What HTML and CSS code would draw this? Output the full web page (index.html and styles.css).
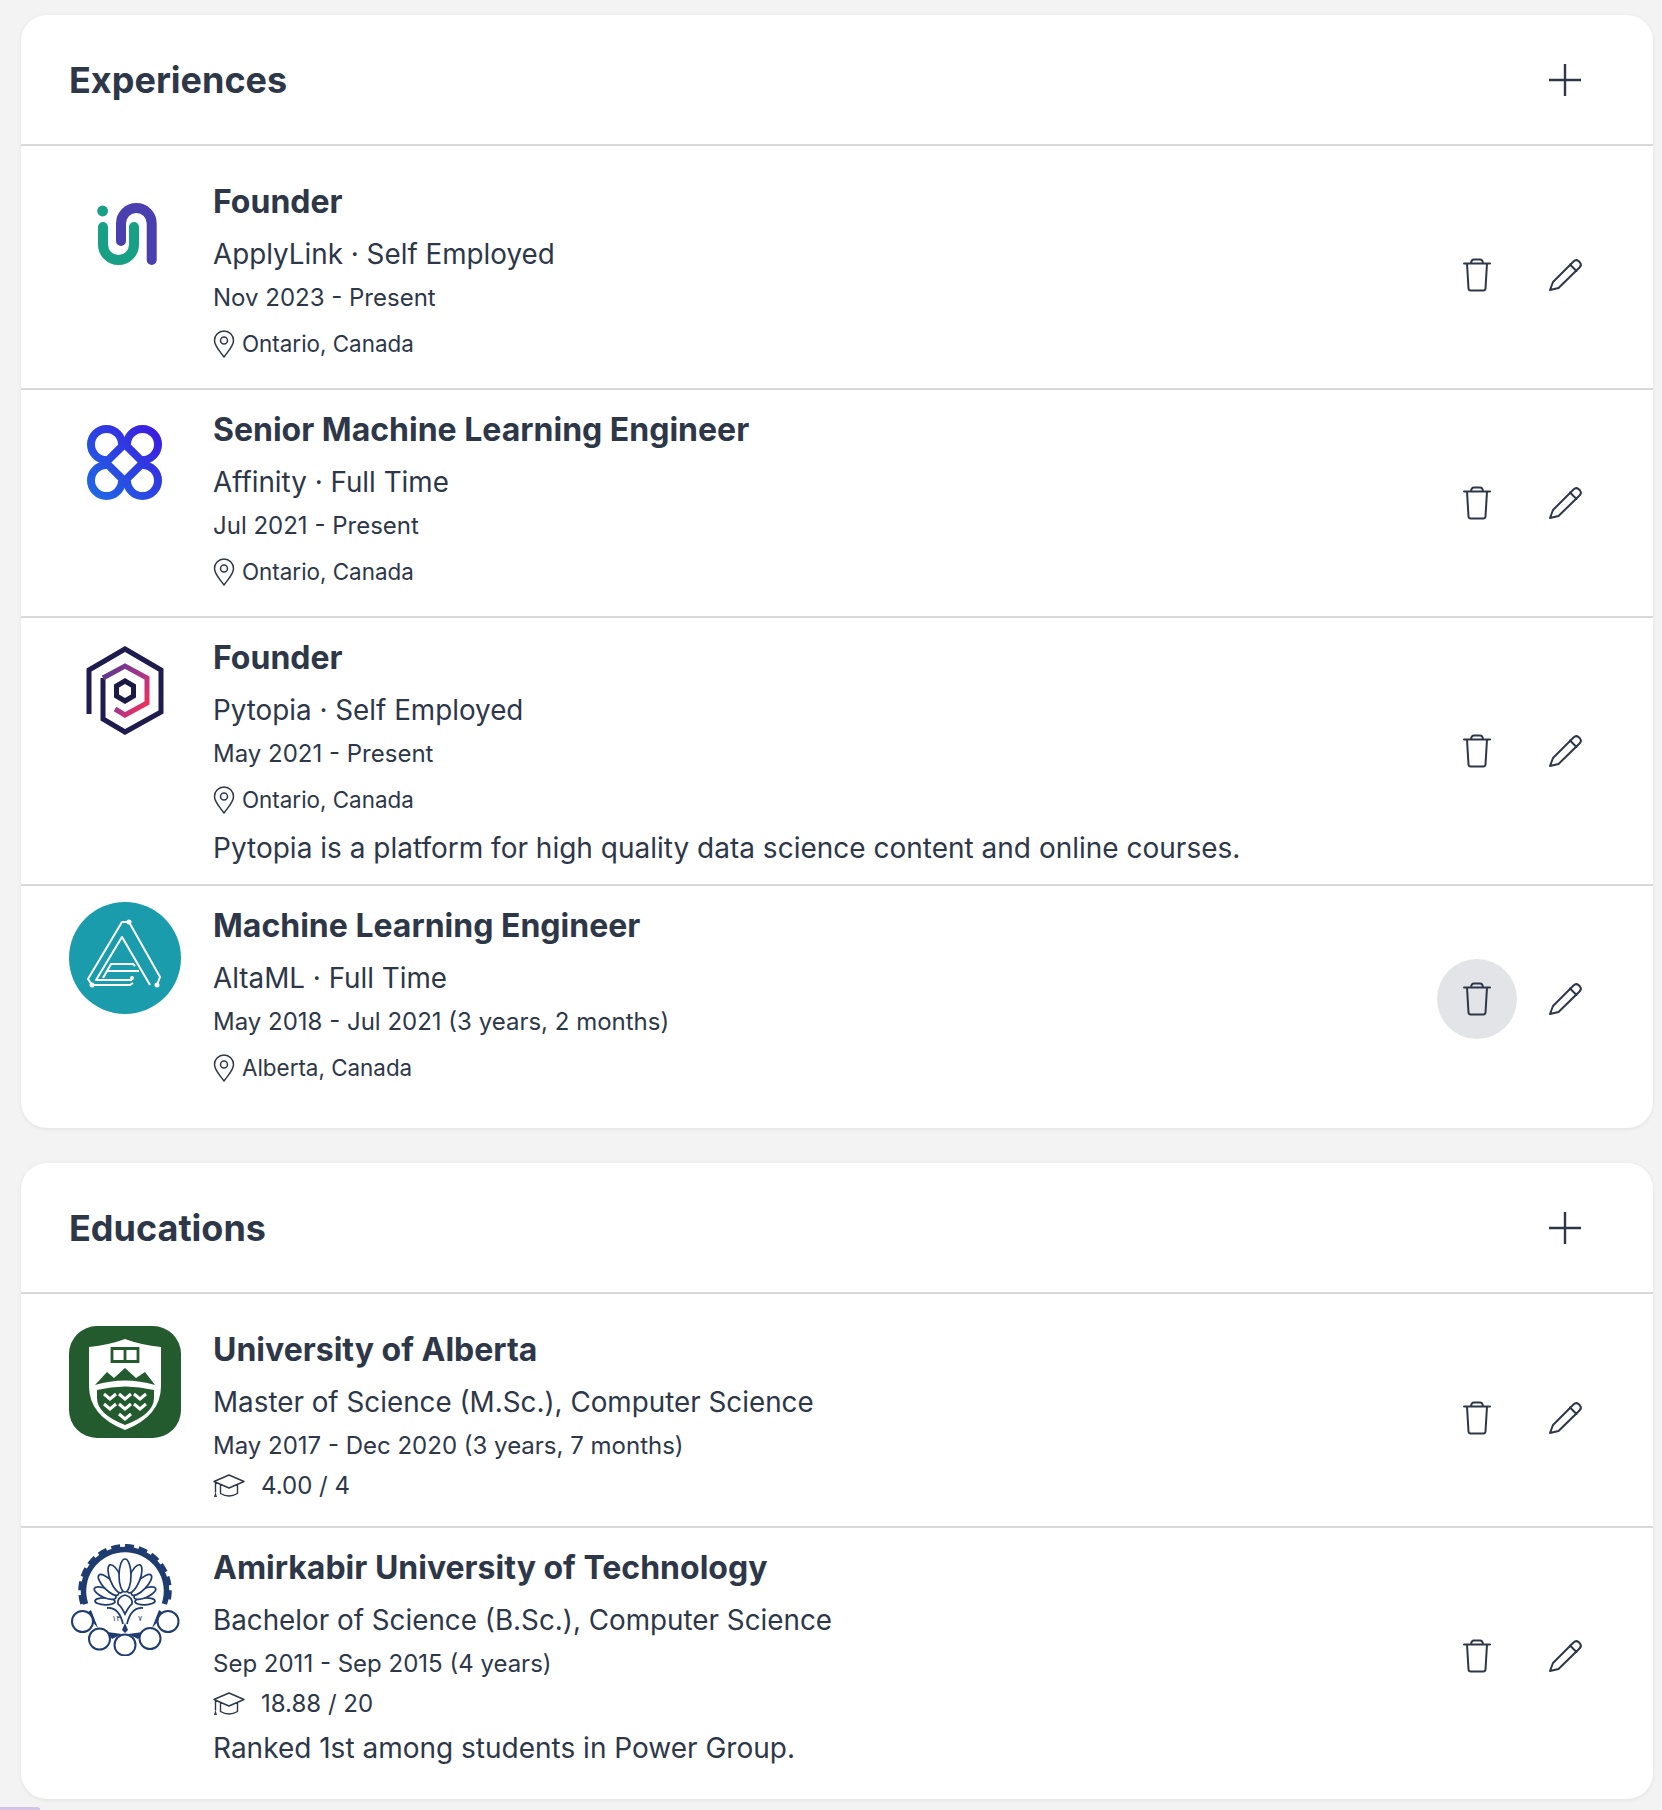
FILE: index.html
```html
<!DOCTYPE html>
<html lang="en">
<head>
  <meta charset="UTF-8">
  <title>Profile</title>
  <link rel="stylesheet" href="styles.css">
</head>
<body>

  <svg class="defs" width="0" height="0" aria-hidden="true">
    <defs>
      <symbol id="i-plus" viewBox="0 0 80 80">
        <path d="M40 24v32M24 40h32" fill="none" stroke="currentColor" stroke-width="2.4"/>
      </symbol>
      <symbol id="i-trash" viewBox="0 0 80 80">
        <path d="M27 28.500h26M30 28.500l1.500 25q.2 2 2.200 2h12.600q2 0 2.200-2L50 28.500M34 28.500q.3-4 3-4h6q2.700 0 3 4" fill="none" stroke="currentColor" stroke-width="2" stroke-linecap="round" stroke-linejoin="round"/>
      </symbol>
      <symbol id="i-pencil" viewBox="0 0 80 80">
        <path d="M25 55l3-8 20.500-20.500q2.500-2.500 5-.5l1.500 1.500q2 2.500-.5 5L33.500 53zM45 29.500l6.500 6.500" fill="none" stroke="currentColor" stroke-width="2" stroke-linecap="round" stroke-linejoin="round"/>
      </symbol>
      <symbol id="i-pin" viewBox="0 0 22 28">
        <path d="M11 27C6 20 1.500 16 1.500 10.500a9.500 9.500 0 0 1 19 0C20.500 16 16 20 11 27z" fill="none" stroke="currentColor" stroke-width="1.500" stroke-linejoin="round"/>
        <circle cx="11" cy="10.500" r="3.500" fill="none" stroke="currentColor" stroke-width="1.500"/>
      </symbol>
      <symbol id="i-grad" viewBox="0 0 32 24">
        <path d="M16 1L31 7.500 16 14 1 7.500zM7.500 10.500v9q8.500 5 17 0v-9M2.500 8.500v10" fill="none" stroke="currentColor" stroke-width="1.400" stroke-linejoin="round"/>
        <path d="M2.500 18l-1.500 5h3z" fill="currentColor"/>
      </symbol>
    </defs>
  </svg>

  <section class="card">
    <header class="card-head">
      <h2>Experiences</h2>
      <button class="icon-btn"><svg><use href="#i-plus"/></svg></button>
    </header>

    <article class="row">
      <svg class="logo" viewBox="0 0 112 112">
        <circle cx="33.600" cy="33" r="5.400" fill="#17a085"/>
        <path d="M52 63V45.400a15.350 15.350 0 0 1 30.700 0V82" fill="none" stroke="#4a3fae" stroke-width="10" stroke-linecap="round"/>
        <path d="M34 49V66.500a15.500 15.500 0 0 0 31 0V49" fill="none" stroke="#17a085" stroke-width="10" stroke-linecap="round"/>
      </svg>
      <div class="info">
        <h3>Founder</h3>
        <p class="sub">ApplyLink · Self Employed</p>
        <p class="date">Nov 2023 - Present</p>
        <p class="place"><svg class="pin"><use href="#i-pin"/></svg>Ontario, Canada</p>
      </div>
      <div class="actions">
        <button class="icon-btn"><svg><use href="#i-trash"/></svg></button>
        <button class="icon-btn"><svg><use href="#i-pencil"/></svg></button>
      </div>
    </article>

    <article class="row">
      <svg class="logo" viewBox="0 0 112 112">
        <defs>
          <linearGradient id="aff" gradientUnits="userSpaceOnUse" x1="18" y1="94" x2="93" y2="19">
            <stop offset="0" stop-color="#1c6fe4"/>
            <stop offset="1" stop-color="#3d16e0"/>
          </linearGradient>
        </defs>
        <g fill="none" stroke="url(#aff)" stroke-width="8">
          <path d="M53 38.500A15.500 15.500 0 1 0 37.500 54"/>
          <path d="M58 38.500A15.500 15.500 0 1 1 73.500 54"/>
          <path d="M37.500 59A15.500 15.500 0 1 0 53 74.500"/>
          <path d="M73.500 59A15.500 15.500 0 1 1 58 74.500"/>
          <path d="M55.500 37.800L74.200 56.500 55.500 75.200 36.800 56.500z"/>
        </g>
      </svg>
      <div class="info">
        <h3>Senior Machine Learning Engineer</h3>
        <p class="sub">Affinity · Full Time</p>
        <p class="date">Jul 2021 - Present</p>
        <p class="place"><svg class="pin"><use href="#i-pin"/></svg>Ontario, Canada</p>
      </div>
      <div class="actions">
        <button class="icon-btn"><svg><use href="#i-trash"/></svg></button>
        <button class="icon-btn"><svg><use href="#i-pencil"/></svg></button>
      </div>
    </article>

    <article class="row">
      <svg class="logo" viewBox="0 0 112 112">
        <defs>
          <linearGradient id="pyt" gradientUnits="userSpaceOnUse" x1="34" y1="40" x2="78" y2="70">
            <stop offset="0" stop-color="#5b3a8c"/>
            <stop offset="0.6" stop-color="#a8358c"/>
            <stop offset="1" stop-color="#ee2f5c"/>
          </linearGradient>
        </defs>
        <g fill="none" stroke-width="5" stroke-linejoin="miter">
          <path d="M20 80V36L56 15 92 36V78L56 98 34 85V44" stroke="#1e1b4f"/>
          <path d="M34 44L56 32 78 44V69L56 81 46 75" stroke="url(#pyt)"/>
          <path d="M56 47L64.500 52V62L56 67 47.500 62V52z" stroke="#1a1a44"/>
        </g>
      </svg>
      <div class="info">
        <h3>Founder</h3>
        <p class="sub">Pytopia · Self Employed</p>
        <p class="date">May 2021 - Present</p>
        <p class="place"><svg class="pin"><use href="#i-pin"/></svg>Ontario, Canada</p>
        <p class="desc">Pytopia is a platform for high quality data science content and online courses.</p>
      </div>
      <div class="actions">
        <button class="icon-btn"><svg><use href="#i-trash"/></svg></button>
        <button class="icon-btn"><svg><use href="#i-pencil"/></svg></button>
      </div>
    </article>

    <article class="row">
      <svg class="logo" viewBox="0 0 112 112">
        <circle cx="56" cy="56" r="56" fill="#1a9cad"/>
        <g fill="none" stroke="#fff" stroke-width="2" stroke-linejoin="round">
          <path d="M60 20L91 75 88 83"/>
          <path d="M60 20H53L19 77 23 83H61L64 81"/>
          <path d="M81 83L53 35 27 78H63"/>
          <path d="M34 76L42 62H64L66 64"/>
          <path d="M38 69H70"/>
        </g>
        <g fill="#fff">
          <circle cx="60" cy="20" r="2.500"/>
          <circle cx="88" cy="83" r="2.500"/>
          <circle cx="23" cy="83" r="2.500"/>
          <circle cx="63" cy="76" r="2"/>
        </g>
      </svg>
      <div class="info">
        <h3>Machine Learning Engineer</h3>
        <p class="sub">AltaML · Full Time</p>
        <p class="date">May 2018 - Jul 2021 (3 years, 2 months)</p>
        <p class="place"><svg class="pin"><use href="#i-pin"/></svg>Alberta, Canada</p>
      </div>
      <div class="actions">
        <button class="icon-btn hover"><svg><use href="#i-trash"/></svg></button>
        <button class="icon-btn"><svg><use href="#i-pencil"/></svg></button>
      </div>
    </article>
  </section>

  <section class="card">
    <header class="card-head">
      <h2>Educations</h2>
      <button class="icon-btn"><svg><use href="#i-plus"/></svg></button>
    </header>

    <article class="row">
      <svg class="logo" viewBox="0 0 112 112">
        <rect width="112" height="112" rx="28" fill="#235a2e"/>
        <path d="M20 21Q40 19 56 13 72 19 92 21V60Q92 90 56 104 20 90 20 60z" fill="#fff"/>
        <path d="M43 22.500h26v13H43zM56 22.500v13" fill="none" stroke="#235a2e" stroke-width="2.800"/>
        <path d="M26 59L38 46 45 52 56 42 67 52 76 46 86 59Q56 50 26 59z" fill="#235a2e"/>
        <path d="M28 64Q56 57 85 64V72Q85 88 56 99 28 88 28 72z" fill="#235a2e"/>
        <g fill="none" stroke="#fff" stroke-width="3">
          <path d="M35 68l6 5 6-5M35 78l6 5 6-5M50 68l6 5 6-5M50 78l6 5 6-5M50 88l6 5 6-5M65 68l6 5 6-5M65 78l6 5 6-5"/>
        </g>
      </svg>
      <div class="info">
        <h3>University of Alberta</h3>
        <p class="sub">Master of Science (M.Sc.), Computer Science</p>
        <p class="date">May 2017 - Dec 2020 (3 years, 7 months)</p>
        <p class="gpa"><svg class="grad"><use href="#i-grad"/></svg>4.00 / 4</p>
      </div>
      <div class="actions">
        <button class="icon-btn"><svg><use href="#i-trash"/></svg></button>
        <button class="icon-btn"><svg><use href="#i-pencil"/></svg></button>
      </div>
    </article>

    <article class="row">
      <svg class="logo" viewBox="0 0 112 112">
        <path d="M16.600 60A41.500 41.500 0 1 1 95.400 60" fill="none" stroke="#1f3c70" stroke-width="5.500"/>
        <path d="M13 60A45 45 0 1 1 99 60" fill="none" stroke="#1f3c70" stroke-width="3.500" stroke-dasharray="9 5"/>
        <g fill="#fff" stroke="#1f3c70" stroke-width="1.700">
          <ellipse cx="56" cy="38" rx="3.500" ry="10" transform="rotate(88 56 58)"/>
          <ellipse cx="56" cy="38" rx="3.500" ry="10" transform="rotate(-88 56 58)"/>
          <ellipse cx="56" cy="36.250" rx="4.500" ry="11.750" transform="rotate(66 56 58)"/>
          <ellipse cx="56" cy="36.250" rx="4.500" ry="11.750" transform="rotate(-66 56 58)"/>
          <ellipse cx="56" cy="34.250" rx="5" ry="13.750" transform="rotate(44 56 58)"/>
          <ellipse cx="56" cy="34.250" rx="5" ry="13.750" transform="rotate(-44 56 58)"/>
          <ellipse cx="56" cy="33" rx="5.500" ry="15" transform="rotate(22 56 58)"/>
          <ellipse cx="56" cy="33" rx="5.500" ry="15" transform="rotate(-22 56 58)"/>
          <ellipse cx="56" cy="31.500" rx="6" ry="16.500"/>
        </g>
        <path d="M56 51q8 2 7 9-3 2-7 10-4-8-7-10-1-7 7-9z" fill="#fff" stroke="#1f3c70" stroke-width="1.700"/>
        <path d="M38 64q12-1 16 16M74 64q-12-1-16 16" fill="none" stroke="#1f3c70" stroke-width="1.800"/>
        <text class="digits" x="43" y="77">۱۳</text>
        <text class="digits" x="69" y="77">۷</text>
        <path d="M22 66L29 84 16 70zM90 66L83 84 96 70zM38 88L53 90 43 95zM74 88L59 90 69 95zM56 79l3 7-3 3-3-3z" fill="#1f3c70"/>
        <g fill="#fff" stroke="#1f3c70" stroke-width="2">
          <circle cx="13.500" cy="77.500" r="10.500"/>
          <circle cx="30.500" cy="95" r="10.500"/>
          <circle cx="56" cy="101" r="10.500"/>
          <circle cx="81" cy="94.500" r="10.500"/>
          <circle cx="99" cy="77.500" r="10.500"/>
        </g>
      </svg>
      <div class="info">
        <h3>Amirkabir University of Technology</h3>
        <p class="sub">Bachelor of Science (B.Sc.), Computer Science</p>
        <p class="date">Sep 2011 - Sep 2015 (4 years)</p>
        <p class="gpa"><svg class="grad"><use href="#i-grad"/></svg>18.88 / 20</p>
        <p class="desc">Ranked 1st among students in Power Group.</p>
      </div>
      <div class="actions">
        <button class="icon-btn"><svg><use href="#i-trash"/></svg></button>
        <button class="icon-btn"><svg><use href="#i-pencil"/></svg></button>
      </div>
    </article>
  </section>

  <div class="peek"></div>

</body>
</html>
```

FILE: styles.css
```css
body {
  margin: 0;
  padding: 15px 9px 0 21px;
  background: #f3f3f3;
  color: #2d3748;
  font-family: "Inter", "Liberation Sans", sans-serif;
}

.defs {
  position: absolute;
}

.card {
  background: #fff;
  border-radius: 26px;
  box-shadow: 0 1px 4px rgba(0, 0, 0, 0.08);
  margin-bottom: 35px;
}

.card:last-of-type {
  margin-bottom: 8px;
}

.card-head {
  display: flex;
  align-items: center;
  justify-content: space-between;
  height: 129px;
  padding: 0 48px;
  border-bottom: 2px solid #d9d9d9;
}

h2 {
  margin: 0;
  font-size: 36px;
  line-height: 48px;
  font-weight: 700;
}

.row {
  display: flex;
  align-items: center;
  gap: 32px;
  padding: 16px 48px;
  border-bottom: 2px solid #d9d9d9;
}

.row:first-of-type {
  padding-top: 32px;
}

.row:last-of-type {
  padding-bottom: 32px;
  border-bottom: none;
}

.logo {
  flex: none;
  align-self: flex-start;
  width: 112px;
  height: 112px;
}

.digits {
  font-family: "DejaVu Sans", sans-serif;
  font-size: 8px;
  fill: #1f3c70;
}

.info {
  flex: 1;
}

h3 {
  margin: 0;
  font-size: 32px;
  line-height: 48px;
  font-weight: 700;
}

.info p {
  margin: 0;
}

.info .sub {
  margin-top: 8px;
  font-size: 27.8px;
  line-height: 40px;
}

.info .date {
  margin-top: 8px;
  font-size: 24px;
  line-height: 32px;
}

.info .place {
  display: flex;
  align-items: center;
  gap: 7px;
  margin-top: 14px;
  margin-bottom: 12px;
  font-size: 22.4px;
  line-height: 32px;
}

.info .gpa {
  display: flex;
  align-items: center;
  gap: 16px;
  margin-top: 8px;
  margin-bottom: 8px;
  font-size: 24px;
  line-height: 32px;
}

.info .desc {
  font-size: 28px;
  line-height: 40px;
}

.info .gpa + .desc {
  margin-bottom: -1px;
}

.pin {
  width: 22px;
  height: 28px;
}

.grad {
  width: 32px;
  height: 24px;
}

.actions {
  display: flex;
  gap: 8px;
}

.icon-btn {
  width: 80px;
  height: 80px;
  padding: 0;
  border: none;
  border-radius: 50%;
  background: none;
  color: #2d3748;
  cursor: pointer;
}

.icon-btn svg {
  display: block;
  width: 80px;
  height: 80px;
}

.icon-btn.hover,
.icon-btn:hover {
  background: #e2e4e8;
}

.peek {
  width: 40px;
  height: 3px;
  margin-left: -21px;
  background: #d4c4e6;
  border-top-right-radius: 4px;
}
```
